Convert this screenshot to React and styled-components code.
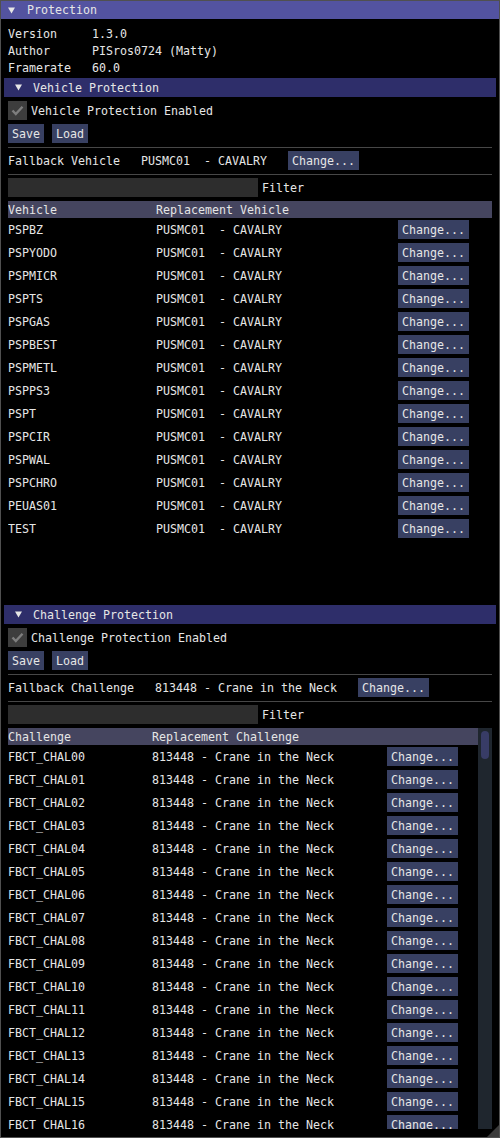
import React from "react";
import styled, { createGlobalStyle } from "styled-components";

const vehicles = [
  "PSPBZ",
  "PSPYODO",
  "PSPMICR",
  "PSPTS",
  "PSPGAS",
  "PSPBEST",
  "PSPMETL",
  "PSPPS3",
  "PSPT",
  "PSPCIR",
  "PSPWAL",
  "PSPCHRO",
  "PEUAS01",
  "TEST",
];

const challenges = Array.from({ length: 20 }, (_, i) => `FBCT_CHAL${String(i).padStart(2, "0")}`);

const GlobalStyle = createGlobalStyle`
  html, body {
    margin: 0;
    padding: 0;
    background: #000;
  }
  body {
    font-family: "DejaVu Sans Mono", "Liberation Mono", monospace;
    font-size: 11.63px;
    color: #e6e6e6;
  }
`;

const Arrow = () => (
  <ArrowIcon width="7" height="7" viewBox="0 0 7 7">
    <polygon points="0,0.5 7,0.5 3.5,6.5" fill="#e6e6e6" />
  </ArrowIcon>
);

const Check = () => (
  <svg width="13" height="11" viewBox="0 0 13 11">
    <polyline points="1.5,5.5 4.8,9 11.5,1.8" fill="none" stroke="#7e7e7e" strokeWidth="2.4" />
  </svg>
);

const CollapsingHeader = ({ children }) => (
  <Header>
    <Arrow />
    <span>{children}</span>
  </Header>
);

const Section = ({ name, label, value, keyCol, replCol, rows, cols, tableHeight, scroll }) => (
  <>
    <CollapsingHeader>{name} Protection</CollapsingHeader>
    <CheckRow>
      <CheckBox>
        <Check />
      </CheckBox>
      <span>{name} Protection Enabled</span>
    </CheckRow>
    <ButtonRow>
      <Button>Save</Button>
      <Button>Load</Button>
    </ButtonRow>
    <Separator />
    <FallbackRow>
      <Spaced>Fallback {label}</Spaced>
      <Spaced>{value}</Spaced>
      <Button>Change...</Button>
    </FallbackRow>
    <Separator />
    <FilterRow>
      <FilterInput />
      <span>Filter</span>
    </FilterRow>
    <Table $height={tableHeight}>
      <TableBody>
        <TableHeader $cols={cols}>
          <span>{keyCol}</span>
          <span>{replCol}</span>
          <span />
        </TableHeader>
        {rows.map((r) => (
          <TableRow key={r} $cols={cols}>
            <span>{r}</span>
            <span>{value}</span>
            <Button>Change...</Button>
          </TableRow>
        ))}
      </TableBody>
      {scroll && (
        <ScrollTrack>
          <ScrollGrab />
        </ScrollTrack>
      )}
    </Table>
  </>
);

const App = () => (
  <>
    <GlobalStyle />
    <Window>
      <TitleBar>
        <Arrow />
        <span>Protection</span>
      </TitleBar>
      <Content>
        <InfoRow>
          <span>Version</span>
          <span>1.3.0</span>
        </InfoRow>
        <InfoRow>
          <span>Author</span>
          <span>PISros0724 (Matty)</span>
        </InfoRow>
        <InfoRow>
          <span>Framerate</span>
          <span>60.0</span>
        </InfoRow>
        <Section
          name="Vehicle"
          label="Vehicle"
          value="PUSMC01  - CAVALRY"
          keyCol="Vehicle"
          replCol="Replacement Vehicle"
          rows={vehicles}
          cols="148px 242px 94px"
          tableHeight="400px"
        />
        <Section
          name="Challenge"
          label="Challenge"
          value="813448 - Crane in the Neck"
          keyCol="Challenge"
          replCol="Replacement Challenge"
          rows={challenges}
          cols="144px 235px 91px"
          scroll
        />
      </Content>
      <ResizeGrip />
    </Window>
  </>
);

const Window = styled.div`
  position: relative;
  box-sizing: border-box;
  width: 500px;
  height: 1138px;
  border: 1px solid #505050;
  background: #000;
  display: flex;
  flex-direction: column;
  overflow: hidden;
  white-space: pre;
`;

const ArrowIcon = styled.svg`
  align-self: center;
  flex-shrink: 0;
`;

const TitleBar = styled.div`
  height: 18px;
  flex-shrink: 0;
  background: #5353a0;
  display: flex;
  align-items: flex-start;
  gap: 12px;
  padding-left: 7px;
  line-height: 19px;
`;

const Content = styled.div`
  flex: 1;
  min-height: 0;
  display: flex;
  flex-direction: column;
  gap: 4px;
  padding: 8px 7px;
  overflow: hidden;
`;

const InfoRow = styled.div`
  display: grid;
  grid-template-columns: 84px 1fr;
  height: 13px;
  line-height: 15px;
  flex-shrink: 0;
`;

const Header = styled.div`
  margin: 0 -4px;
  height: 19px;
  flex-shrink: 0;
  background: #2e2e6a;
  display: flex;
  align-items: flex-start;
  gap: 11px;
  padding-left: 11px;
  line-height: 21px;
`;

const CheckRow = styled.div`
  display: flex;
  align-items: flex-start;
  gap: 4px;
  height: 19px;
  flex-shrink: 0;
  line-height: 21px;
`;

const CheckBox = styled.div`
  width: 19px;
  height: 19px;
  background: #3d3d3d;
  display: flex;
  align-items: center;
  justify-content: center;
`;

const ButtonRow = styled.div`
  display: flex;
  gap: 8px;
  flex-shrink: 0;
`;

const Button = styled.button`
  height: 19px;
  padding: 0 4px;
  border: none;
  background: #384062;
  color: #e6e6e6;
  font: inherit;
  line-height: 21px;
  white-space: pre;
  justify-self: start;
  overflow: hidden;
`;

const Separator = styled.div`
  height: 1px;
  margin-bottom: -1px;
  flex-shrink: 0;
  background: #474747;
`;

const FallbackRow = styled.div`
  display: flex;
  align-items: flex-start;
  height: 19px;
  flex-shrink: 0;
  line-height: 21px;
`;

const Spaced = styled.span`
  margin-right: 21px;
`;

const FilterRow = styled.div`
  display: flex;
  align-items: flex-start;
  gap: 4px;
  height: 19px;
  flex-shrink: 0;
  line-height: 21px;
`;

const FilterInput = styled.input`
  width: 250px;
  height: 19px;
  box-sizing: border-box;
  border: none;
  outline: none;
  background: #2d2d2d;
  padding: 0;
`;

const Table = styled.div`
  display: flex;
  ${({ $height }) => ($height ? `height: ${$height}; flex-shrink: 0;` : "flex: 1; min-height: 0;")}
  overflow: hidden;
`;

const TableBody = styled.div`
  flex: 1;
  min-width: 0;
  display: flex;
  flex-direction: column;
`;

const TableHeader = styled.div`
  display: grid;
  grid-template-columns: ${({ $cols }) => $cols};
  height: 17px;
  flex-shrink: 0;
  background: #45455f;
  line-height: 19px;
`;

const TableRow = styled.div`
  display: grid;
  grid-template-columns: ${({ $cols }) => $cols};
  box-sizing: border-box;
  height: 23px;
  padding-top: 2px;
  flex-shrink: 0;
  align-items: start;
  line-height: 21px;
`;

const ScrollTrack = styled.div`
  width: 14px;
  flex-shrink: 0;
  background: #1f262e;
  padding: 3px;
  box-sizing: border-box;
`;

const ScrollGrab = styled.div`
  height: 28px;
  border-radius: 4px;
  background: #383c66;
`;

const ResizeGrip = styled.div`
  position: absolute;
  right: 0;
  bottom: 0;
  width: 12px;
  height: 12px;
  background: #3a3a3a;
  clip-path: polygon(100% 0, 100% 100%, 0 100%);
`;

export default App;
